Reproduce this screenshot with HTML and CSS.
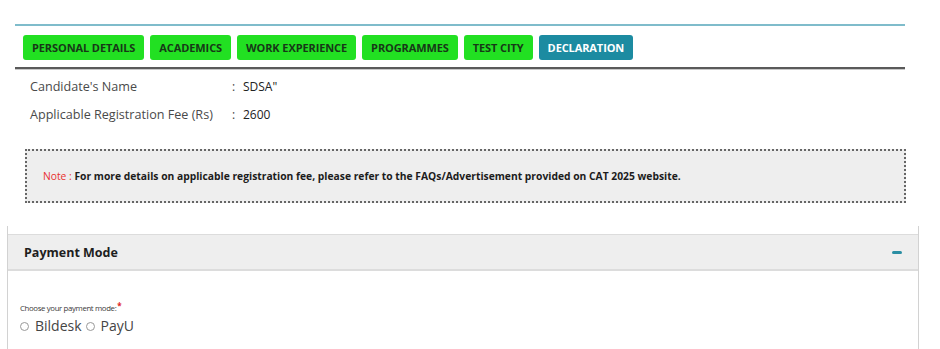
FILE: index.html
```html
<!DOCTYPE html>
<html lang="en">
  <head>
    <meta charset="UTF-8" />
    <title>Payment</title>
    <link rel="stylesheet" href="styles.css">
  </head>

  <body>
    <div id="page">
      <div class="steps">
        <span class="step done">PERSONAL DETAILS</span>
        <span class="step done">ACADEMICS</span>
        <span class="step done">WORK EXPERIENCE</span>
        <span class="step done">PROGRAMMES</span>
        <span class="step done">TEST CITY</span>
        <span class="step active">DECLARATION</span>
      </div>

      <div class="info">
        <div class="row">
          <span class="lbl">Candidate's Name</span>
          <span class="sep">:</span>
          <span class="val">SDSA"</span>
        </div>
        <div class="row">
          <span class="lbl">Applicable Registration Fee (Rs)</span>
          <span class="sep">:</span>
          <span class="val">2600</span>
        </div>
      </div>

      <div class="note">
        <span class="red">Note : </span>For more details on applicable registration fee, please refer to the FAQs/Advertisement provided on CAT 2025 website.
      </div>
    </div>

    <div class="panel">
      <div class="panel-head">
        <span>Payment Mode</span>
        <span class="minus"></span>
      </div>
      <div class="panel-body">
        <div class="choose">Choose your payment mode:<span class="star">*</span></div>
        <div class="modes">
          <label><span class="radio"></span>Bildesk</label>
          <label><span class="radio"></span>PayU</label>
        </div>
      </div>
    </div>
  </body>
</html>
```

FILE: styles.css
```css
* {
  padding: 0px;
  margin: 0px;
  box-sizing: border-box;
}

html,
body {
  width: 100%;
  min-height: 100%;
  background: #fff;
}

body {
  font-family: "Open Sans", "Liberation Sans", sans-serif;
  color: #333;
  padding-top: 24px;
}

#page {
  margin: 0 35px 0 15px;
}

.steps {
  display: flex;
  gap: 6px;
  border-top: 2px solid #7fbccb;
  border-bottom: 2px solid #5a5a5a;
  box-shadow: 0 1px 0 #c8c8c8;
  padding: 9px 8px 7px;
}

.step {
  display: inline-flex;
  align-items: center;
  height: 25px;
  padding: 0 9px;
  border-radius: 3px;
  font-size: 11px;
  font-weight: 700;
  letter-spacing: -0.1px;
}

.step.done {
  background: #22e022;
  color: #173817;
}

.step.active {
  background: #1c8ba1;
  color: #fff;
}

.info {
  padding: 3px 0 0 15px;
}

.row {
  display: flex;
  height: 28px;
  align-items: center;
}

.lbl {
  width: 202px;
  font-size: 12.6px;
  color: #4a4a4a;
}

.sep {
  width: 11px;
  font-size: 12px;
  color: #444;
}

.val {
  font-size: 12px;
  color: #222;
}

.note {
  margin: 21px 0 0 10px;
  width: 881px;
  height: 54px;
  display: flex;
  align-items: center;
  padding-left: 16px;
  background: #eeeeee;
  border: 2px dotted #666;
  font-size: 10.3px;
  font-weight: 700;
  color: #1c1c1c;
}

.note .red {
  color: #e8312f;
  font-weight: 400;
  white-space: pre;
}

.panel {
  margin: 23px 0 0 7px;
  width: 912px;
  border-left: 1px solid #d2d2d2;
  border-right: 1px solid #d2d2d2;
  padding-top: 8px;
}

.panel-head {
  display: flex;
  justify-content: space-between;
  align-items: center;
  height: 37px;
  padding: 1px 16px 0 16px;
  background: #eeeeee;
  border-top: 1px solid #dcdcdc;
  border-bottom: 2px solid #dcdcdc;
  font-size: 12.5px;
  font-weight: 700;
  color: #1e1e1e;
}

.minus {
  width: 10px;
  height: 3px;
  border-radius: 2px;
  background: #2a8ea3;
}

.panel-body {
  padding: 29px 0 20px 12px;
}

.choose {
  font-size: 7.8px;
  letter-spacing: -0.35px;
  color: #3a3a3a;
}

.star {
  color: #e01f1f;
  font-weight: 700;
  vertical-align: 2px;
  font-size: 8px;
  margin-left: 1px;
}

.modes {
  display: flex;
  gap: 4px;
  margin-top: 3px;
  font-size: 14px;
  color: #444;
}

.modes label {
  display: flex;
  align-items: center;
  gap: 6px;
}

.radio {
  width: 9px;
  height: 9px;
  border: 1px solid #999;
  border-radius: 50%;
  background: #fff;
  margin-top: 1px;
}
```
